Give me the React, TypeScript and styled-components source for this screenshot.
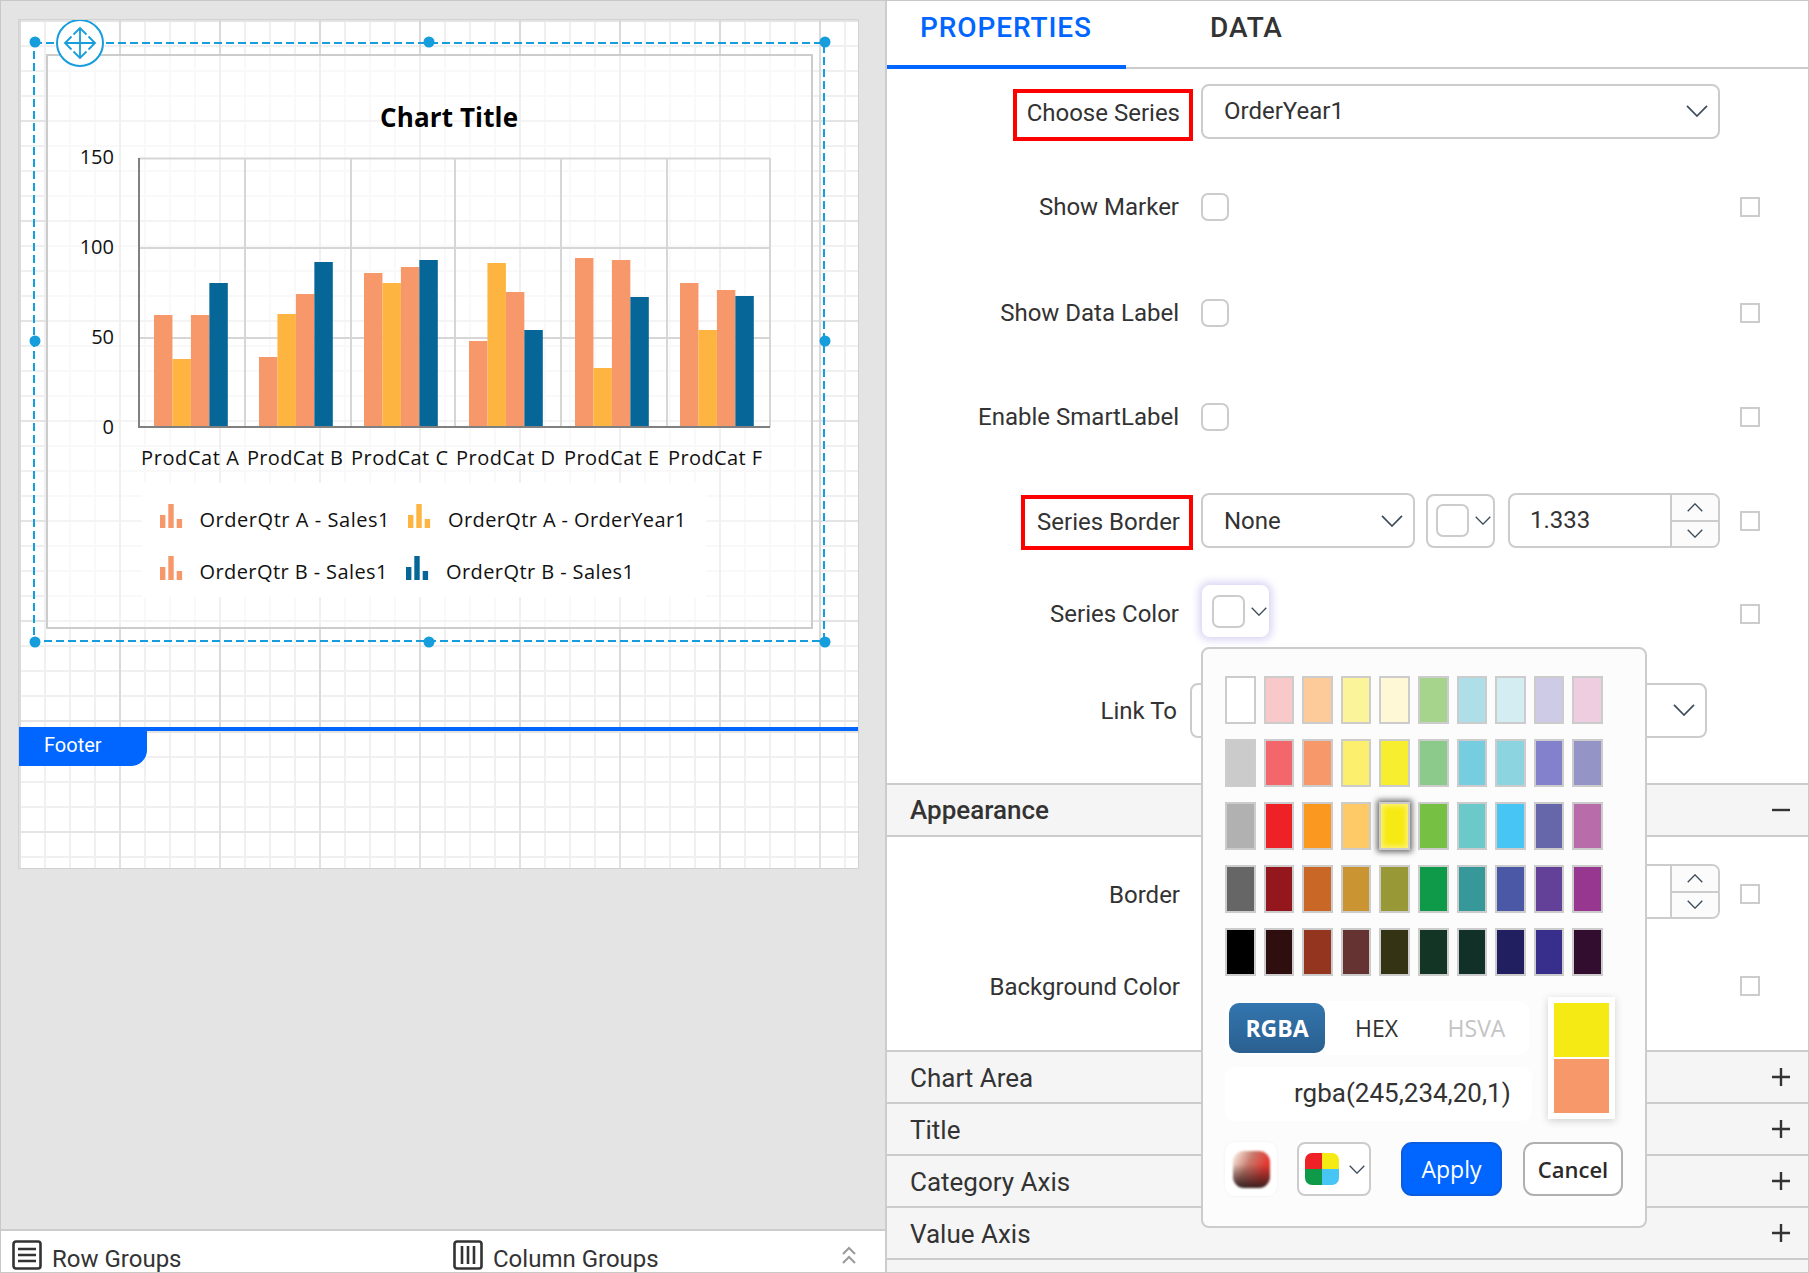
import React from "react";
import styled, { createGlobalStyle, css } from "styled-components";

const GlobalStyle = createGlobalStyle`
  html, body {
    margin: 0;
    padding: 0;
    background: #fff;
  }
  * {
    box-sizing: border-box;
  }
`;

const ORANGE = "#f7986a";
const AMBER = "#fdb441";
const NAVY = "#066698";
const HANDLE = "#159ddc";

const categories = [
  { name: "ProdCat A", x: 141, width: 98, start: 154, tops: [315, 359, 315, 283] },
  { name: "ProdCat B", x: 247, width: 96, start: 259, tops: [357, 314, 294, 262] },
  { name: "ProdCat C", x: 351, width: 97, start: 364, tops: [273, 283, 267, 260] },
  { name: "ProdCat D", x: 456, width: 99, start: 469, tops: [341, 263, 292, 330] },
  { name: "ProdCat E", x: 564, width: 95, start: 575, tops: [258, 368, 260, 297] },
  { name: "ProdCat F", x: 668, width: 94, start: 680, tops: [283, 330, 290, 296] },
];

const barColors = [ORANGE, AMBER, ORANGE, NAVY];

const legendItems = [
  { label: "OrderQtr A - Sales1", color: ORANGE, icon: 160, x: 199.5, width: 190, bottom: 528, y: 527 },
  { label: "OrderQtr A - OrderYear1", color: AMBER, icon: 408, x: 448, width: 238, bottom: 528, y: 527 },
  { label: "OrderQtr B - Sales1", color: ORANGE, icon: 160, x: 199.5, width: 188, bottom: 580, y: 579 },
  { label: "OrderQtr B - Sales1", color: NAVY, icon: 406, x: 446, width: 188, bottom: 580, y: 579 },
];

const axisTicks = [
  { label: "150", y: 164 },
  { label: "100", y: 254 },
  { label: "50", y: 344 },
  { label: "0", y: 434 },
];

const swatches = [
  ["#ffffff", "#f9c9ca", "#fdcb99", "#fcf49b", "#fff8d6", "#a7d48c", "#aedfe9", "#d3edf3", "#cdcbe5", "#eecde1"],
  ["#cbcbcb", "#f3666b", "#f7986a", "#fbef6d", "#f8ee30", "#8bca8a", "#76cddf", "#8dd4e1", "#8380cc", "#9594c7"],
  ["#b1b1b1", "#ee2127", "#fa9820", "#fec967", "#f6ea14", "#76c044", "#6bc9c9", "#47c6f6", "#6667ab", "#b86ca9"],
  ["#666666", "#93171c", "#c96726", "#ca9432", "#989836", "#0f9a49", "#369899", "#4b58a6", "#644198", "#97378f"],
  ["#000000", "#2f0e10", "#93351f", "#663333", "#343313", "#123525", "#113027", "#211f60", "#382f8c", "#320d30"],
];

const handles = [
  [35, 42],
  [429, 42],
  [825, 42],
  [35, 341],
  [825, 341],
  [35, 642],
  [429, 642],
  [825, 642],
];

const Chevron = ({ size = 22, up = false }: { size?: number; up?: boolean }) => (
  <svg width={size} height={size / 2 + 1} viewBox="0 0 22 12" fill="none">
    <path
      d={up ? "M1 11.2 L11 1 L21 11.2" : "M1 .8 L11 11 L21 .8"}
      stroke="#3d4d5c"
      strokeWidth={size < 18 ? 1.9 : 1.7}
    />
  </svg>
);

const SpinButtons = () => (
  <Spin>
    <SpinPart>
      <Chevron size={16} up />
    </SpinPart>
    <SpinPart>
      <Chevron size={16} />
    </SpinPart>
  </Spin>
);

const ChartDrawing = () => (
  <ChartSvg viewBox="48.5 56 762 571">
    <text x="380" y="127" fontSize="26" fontWeight="700" fill="#000" textLength="138">
      Chart Title
    </text>

    {[248, 338].map((y) => (
      <line key={y} x1="139" x2="770" y1={y} y2={y} stroke="#d6d6d6" strokeWidth="2" />
    ))}
    <line x1="139" x2="770" y1="158.5" y2="158.5" stroke="#d6d6d6" strokeWidth="2" />
    {[245, 351, 455, 561, 667, 770].map((x) => (
      <line key={x} x1={x} x2={x} y1="158" y2="427" stroke="#d6d6d6" strokeWidth="2" />
    ))}

    {categories.map((cat) =>
      cat.tops.map((top, i) => (
        <rect key={cat.name + i} x={cat.start + i * 18.45} y={top} width="18.45" height={427 - top} fill={barColors[i]} />
      )),
    )}

    <line x1="139" x2="139" y1="158" y2="428" stroke="#808080" strokeWidth="2" />
    <line x1="138" x2="770" y1="427" y2="427" stroke="#808080" strokeWidth="2" />

    {axisTicks.map((tick) => (
      <text key={tick.label} x="114" y={tick.y} fontSize="20" textAnchor="end" fill="#111">
        {tick.label}
      </text>
    ))}
    {categories.map((cat) => (
      <text key={cat.name} x={cat.x} y="465" fontSize="20" fill="#111" textLength={cat.width}>
        {cat.name}
      </text>
    ))}

    <rect x="142" y="483" width="564" height="114" fill="#fff" />
    {legendItems.map((item) => (
      <g key={item.label + item.x} fill={item.color}>
        <rect x={item.icon} y={item.bottom - 13} width="5.4" height="13" />
        <rect x={item.icon + 8.3} y={item.bottom - 24} width="5.4" height="24" />
        <rect x={item.icon + 16.7} y={item.bottom - 9} width="5.4" height="9" />
        <text x={item.x} y={item.y} fontSize="20" fill="#111" textLength={item.width}>
          {item.label}
        </text>
      </g>
    ))}
  </ChartSvg>
);

const SelectionOverlay = () => (
  <Overlay viewBox="19 20 839 848">
    <rect x="34" y="43" width="790" height="598" fill="none" stroke={HANDLE} strokeWidth="2" strokeDasharray="8 4" />
    {handles.map(([cx, cy]) => (
      <circle key={`${cx}-${cy}`} cx={cx} cy={cy} r="5.5" fill={HANDLE} />
    ))}
    <circle cx="80" cy="43" r="23" fill="#fff" stroke={HANDLE} strokeWidth="2" />
    <path
      d="M80 28v30M64.5 43h31M73.5 34.5l6.5-6.5 6.5 6.5M73.5 51.5l6.5 6.5 6.5-6.5M71.5 36.5l-6.5 6.5 6.5 6.5M88.5 36.5l6.5 6.5-6.5 6.5"
      fill="none"
      stroke={HANDLE}
      strokeWidth="1.8"
    />
  </Overlay>
);

const ColorPopup = () => (
  <Popup>
    <SwatchGrid>
      {swatches.flat().map((color, i) => (
        <Swatch key={i} $color={color} $selected={i === 24} />
      ))}
    </SwatchGrid>

    <ModeRow>
      <ModeColumn>
        <ModeTabs>
          <ModeActive>RGBA</ModeActive>
          <ModeTab>HEX</ModeTab>
          <ModeTab $muted>HSVA</ModeTab>
        </ModeTabs>
        <ValueBox>rgba(245,234,20,1)</ValueBox>
      </ModeColumn>
      <Preview>
        <PreviewPart $color="#f6ea14" />
        <PreviewPart $color={ORANGE} />
      </Preview>
    </ModeRow>

    <ActionRow>
      <GradientTile>
        <GradientChip />
      </GradientTile>
      <PaletteButton>
        <PaletteChip />
        <Chevron size={16} />
      </PaletteButton>
      <ApplyButton>Apply</ApplyButton>
      <CancelButton>Cancel</CancelButton>
    </ActionRow>
  </Popup>
);

const Section = ({ title, top }: { title: string; top?: boolean }) => (
  <SectionHeader>
    <SectionTitle $strong={top}>{title}</SectionTitle>
    <svg width="18" height="18" viewBox="0 0 18 18">
      <path d={top ? "M0 9h18" : "M0 9h18M9 0v18"} stroke="#333" strokeWidth="2.4" />
    </svg>
  </SectionHeader>
);

export default function App() {
  return (
    <Page>
      <GlobalStyle />
      <LeftPanel>
        <Workspace>
          <Canvas>
            <BodyBand>
              <ChartFrame>
                <ChartDrawing />
              </ChartFrame>
            </BodyBand>
            <FooterBand>
              <FooterTab>Footer</FooterTab>
            </FooterBand>
            <SelectionOverlay />
          </Canvas>
        </Workspace>
        <GroupBar>
          <GroupItem $width={441}>
            <svg width="30" height="30" viewBox="0 0 30 30" fill="none" stroke="#333" strokeWidth="2.6">
              <rect x="1.5" y="1.5" width="27" height="27" rx="2.5" />
              <path d="M6 9h18M6 15h18M6 21h18" />
            </svg>
            <GroupLabel>Row Groups</GroupLabel>
          </GroupItem>
          <GroupItem $width={388}>
            <svg width="30" height="30" viewBox="0 0 30 30" fill="none" stroke="#333" strokeWidth="2.6">
              <rect x="1.5" y="1.5" width="27" height="27" rx="2.5" />
              <path d="M9 6v18M15 6v18M21 6v18" />
            </svg>
            <GroupLabel>Column Groups</GroupLabel>
          </GroupItem>
          <CollapseIcon width="16" height="20" viewBox="0 0 16 20" fill="none" stroke="#9a9a9a" strokeWidth="2">
            <path d="M2 8l6-6 6 6M2 17l6-6 6 6" />
          </CollapseIcon>
        </GroupBar>
      </LeftPanel>

      <RightPanel>
        <Tabs>
          <Tab $active>PROPERTIES</Tab>
          <Tab>DATA</Tab>
        </Tabs>

        <FieldList>
          <FieldRow $height={84}>
            <MarkedLabel>Choose Series</MarkedLabel>
            <SelectBox>
              OrderYear1
              <Chevron />
            </SelectBox>
          </FieldRow>
          <FieldRow $height={108}>
            <FieldLabel>Show Marker</FieldLabel>
            <CheckBox />
            <RowCheck />
          </FieldRow>
          <FieldRow $height={104}>
            <FieldLabel>Show Data Label</FieldLabel>
            <CheckBox />
            <RowCheck />
          </FieldRow>
          <FieldRow $height={104}>
            <FieldLabel>Enable SmartLabel</FieldLabel>
            <CheckBox />
            <RowCheck />
          </FieldRow>
          <FieldRow $height={103}>
            <MarkedLabel $tall>Series Border</MarkedLabel>
            <ControlGroup>
              <SelectBox $width={214}>
                None
                <Chevron />
              </SelectBox>
              <ColorButton>
                <ColorChip />
                <Chevron size={16} />
              </ColorButton>
              <NumberBox>
                <NumberValue>1.333</NumberValue>
                <SpinButtons />
              </NumberBox>
            </ControlGroup>
            <RowCheck />
          </FieldRow>
          <FieldRow $height={84}>
            <FieldLabel>Series Color</FieldLabel>
            <ColorButton $focused>
              <ColorChip />
              <Chevron size={16} />
            </ColorButton>
            <RowCheck />
          </FieldRow>
          <FieldRow $height={108} $shifted>
            <FieldLabel $drop>Link To</FieldLabel>
            <SelectBox>
              <span />
              <Chevron />
            </SelectBox>
          </FieldRow>
        </FieldList>

        <Section title="Appearance" top />

        <SectionBody>
          <FieldRow $height={114}>
            <FieldLabel $drop>Border</FieldLabel>
            <ControlGroup>
              <NumberBox $push>
                <NumberValue />
                <SpinButtons />
              </NumberBox>
            </ControlGroup>
            <RowCheck />
          </FieldRow>
          <FieldRow $height={70}>
            <FieldLabel $drop>Background Color</FieldLabel>
            <span />
            <RowCheck />
          </FieldRow>
        </SectionBody>

        <Section title="Chart Area" />
        <Section title="Title" />
        <Section title="Category Axis" />
        <Section title="Value Axis" />
        <SectionHeader />

        <ColorPopup />
      </RightPanel>
    </Page>
  );
}

const gridLines = css`
  background-color: #fff;
  background-image:
    linear-gradient(to right, var(--major) 2px, transparent 2px),
    linear-gradient(to bottom, #e4e4e4 2px, transparent 2px),
    linear-gradient(to right, #f0f0f0 2px, transparent 2px),
    linear-gradient(to bottom, #f0f0f0 2px, transparent 2px);
  background-size:
    100px 100px,
    100px 100px,
    25px 25px,
    25px 25px;
`;

const Page = styled.div`
  display: flex;
  width: 1809px;
  height: 1273px;
  border: 1px solid #c8c8c8;
  overflow: hidden;
  font-family: Roboto, "Liberation Sans", sans-serif;
  font-size: 24px;
  color: #333;
`;

const LeftPanel = styled.div`
  display: flex;
  flex-direction: column;
  flex: 0 0 886px;
  border-right: 2px solid #cccccc;
`;

const Workspace = styled.div`
  flex: 1;
  padding: 19px 0 0 18px;
  background: #e4e4e4;
`;

const Canvas = styled.div`
  position: relative;
  display: flex;
  flex-direction: column;
  width: 839px;
  height: 848px;
  outline: 1px solid #d2d2d2;
`;

const BodyBand = styled.div`
  --major: #dadada;
  ${gridLines}
  height: 707px;
  padding: 34px 45px 0 27px;
`;

const FooterBand = styled.div`
  --major: #e2e2e2;
  ${gridLines}
  flex: 1;
  border-top: 4px solid #0066ff;
`;

const FooterTab = styled.div`
  display: flex;
  align-items: center;
  width: 128px;
  height: 35px;
  padding: 0 0 8px 25px;
  border-bottom-right-radius: 16px;
  background: #0066ff;
  color: #fff;
  font-size: 20px;
`;

const ChartFrame = styled.div`
  width: 767px;
  height: 575px;
  border: 2px solid #cccccc;
  background: rgba(255, 255, 255, 0.6);
`;

const ChartSvg = styled.svg`
  display: block;
  width: 100%;
  height: 100%;
  font-family: "Open Sans", "Noto Sans", sans-serif;
`;

const Overlay = styled.svg`
  position: absolute;
  inset: 0;
  width: 100%;
  height: 100%;
  pointer-events: none;
`;

const GroupBar = styled.div`
  display: flex;
  align-items: flex-start;
  flex: 0 0 43px;
  padding: 9px 0 0 11px;
  border-top: 2px solid #cccccc;
  background: #fff;
  overflow: hidden;
`;

const GroupItem = styled.div<{ $width: number }>`
  display: flex;
  align-items: flex-start;
  flex: 0 0 ${(p) => p.$width}px;
  gap: 10px;
  height: 30px;
  svg {
    flex: none;
  }
`;

const GroupLabel = styled.span`
  margin-top: 4px;
  line-height: 30px;
`;

const CollapseIcon = styled.svg`
  margin-top: 6px;
`;

const RightPanel = styled.div`
  position: relative;
  flex: 1;
  background: #fff;
`;

const Tabs = styled.div`
  display: flex;
  height: 68px;
  border-bottom: 2px solid #cccccc;
`;

const Tab = styled.div<{ $active?: boolean }>`
  height: 68px;
  width: ${(p) => (p.$active ? 239 : 300)}px;
  padding-left: ${(p) => (p.$active ? 33 : 84)}px;
  border-bottom: ${(p) => (p.$active ? "4px solid #0066ff" : "none")};
  color: ${(p) => (p.$active ? "#0066ff" : "#333")};
  font-size: 28px;
  font-weight: 500;
  line-height: 54px;
  letter-spacing: 0.9px;
`;

const FieldList = styled.div`
  padding-bottom: 19px;
`;

const FieldRow = styled.div<{ $height: number; $shifted?: boolean }>`
  display: grid;
  grid-template-columns: ${(p) => (p.$shifted ? "291px 517px" : "294px 519px 20px")};
  column-gap: ${(p) => (p.$shifted ? 12 : 20)}px;
  align-items: center;
  height: ${(p) => p.$height}px;
`;

const FieldLabel = styled.div<{ $drop?: boolean }>`
  padding: ${(p) => (p.$drop ? 2 : 0)}px ${(p) => (p.$drop ? 1 : 2)}px 0 0;
  text-align: right;
  white-space: nowrap;
`;

const MarkedLabel = styled.div<{ $tall?: boolean }>`
  justify-self: end;
  margin: ${(p) => (p.$tall ? "3px" : "8px")} -12px 0 0;
  padding: 0 9px ${(p) => (p.$tall ? 0 : 3)}px ${(p) => (p.$tall ? 12 : 10)}px;
  border: 4px solid #ff0000;
  line-height: ${(p) => (p.$tall ? 47 : 41)}px;
  white-space: nowrap;
`;

const SelectBox = styled.div<{ $width?: number }>`
  display: flex;
  align-items: center;
  justify-content: space-between;
  width: ${(p) => (p.$width ? `${p.$width}px` : "100%")};
  height: 55px;
  padding: 0 10px 0 21px;
  border: 2px solid #cccccc;
  border-radius: 8px;
  background: #fff;
`;

const ControlGroup = styled.div`
  display: flex;
  align-items: center;
  gap: 11px;
`;

const ColorButton = styled.div<{ $focused?: boolean }>`
  display: flex;
  align-items: center;
  gap: 6px;
  width: ${(p) => (p.$focused ? 67 : 69)}px;
  height: ${(p) => (p.$focused ? 52 : 54)}px;
  margin: ${(p) => (p.$focused ? "0 0 6px 1px" : "0")};
  padding-left: 8px;
  border: 2px solid ${(p) => (p.$focused ? "#fff" : "#cccccc")};
  border-radius: 8px;
  background: #fff;
  box-shadow: ${(p) => (p.$focused ? "0 0 8px 3px #d6d3f3" : "none")};
  svg {
    flex: none;
  }
`;

const ColorChip = styled.div`
  flex: none;
  width: 33px;
  height: 33px;
  border: 2px solid #cccccc;
  border-radius: 7px;
  background: #fff;
`;

const NumberBox = styled.div<{ $push?: boolean }>`
  display: flex;
  width: 212px;
  height: 55px;
  margin: ${(p) => (p.$push ? "0 0 5px auto" : "0 0 0 2px")};
  border: 2px solid #cccccc;
  border-radius: 8px;
  overflow: hidden;
`;

const NumberValue = styled.div`
  flex: 1;
  padding-left: 20px;
  line-height: 51px;
`;

const Spin = styled.div`
  display: flex;
  flex-direction: column;
  flex: 0 0 48px;
  border-left: 2px solid #cccccc;
  background: #fbfbfb;
`;

const SpinPart = styled.div`
  display: flex;
  align-items: center;
  justify-content: center;
  flex: 1;
  &:first-child {
    border-bottom: 2px solid #cccccc;
  }
`;

const CheckBox = styled.div`
  width: 28px;
  height: 28px;
  border: 2px solid #cccccc;
  border-radius: 7px;
  background: #fff;
`;

const RowCheck = styled.div`
  width: 20px;
  height: 20px;
  border: 2px solid #cccccc;
  background: #fff;
`;

const SectionHeader = styled.div`
  display: flex;
  align-items: center;
  justify-content: space-between;
  height: 52px;
  padding: 0 18px 0 23px;
  border-top: 2px solid #cccccc;
  background: #f5f5f5;
`;

const SectionTitle = styled.div<{ $strong?: boolean }>`
  padding-top: ${(p) => (p.$strong ? 0 : 2)}px;
  font-size: 26px;
  font-weight: ${(p) => (p.$strong ? 500 : 400)};
`;

const SectionBody = styled.div`
  padding-bottom: 29px;
  border-top: 2px solid #cccccc;
`;

const Popup = styled.div`
  position: absolute;
  top: 646px;
  left: 314px;
  width: 446px;
  height: 581px;
  padding: 27px 0 0 22px;
  border: 2px solid #cccccc;
  border-radius: 8px;
  background: #fcfcfc;
`;

const SwatchGrid = styled.div`
  display: grid;
  grid-template-columns: repeat(10, 1fr);
  grid-auto-rows: 48px;
  gap: 15px 8px;
  width: 378px;
`;

const Swatch = styled.div<{ $color: string; $selected?: boolean }>`
  border: 2px solid #cccccc;
  background: ${(p) => p.$color};
  ${(p) =>
    p.$selected &&
    css`
      box-shadow:
        0 0 6px 2px rgba(0, 0, 0, 0.6),
        inset 0 0 5px 2px #fff176;
    `}
`;

const ModeRow = styled.div`
  display: flex;
  margin-top: 21px;
`;

const ModeColumn = styled.div`
  display: flex;
  flex-direction: column;
  gap: 12px;
  width: 307px;
  padding-top: 4px;
`;

const ModeTabs = styled.div`
  display: flex;
  align-items: center;
  width: 304px;
  height: 54px;
  padding-left: 4px;
  border-radius: 10px;
  background: #fff;
  font-family: "Open Sans", "Noto Sans", sans-serif;
`;

const ModeActive = styled.div`
  display: flex;
  align-items: center;
  justify-content: center;
  width: 96px;
  height: 50px;
  border-radius: 10px;
  background: linear-gradient(#3375ae, #2a6090);
  color: #fff;
  font-size: 23px;
  font-weight: 700;
`;

const ModeTab = styled.div<{ $muted?: boolean }>`
  width: 100px;
  padding-left: 3px;
  color: ${(p) => (p.$muted ? "#c4c4c4" : "#333")};
  font-size: 23px;
  text-align: center;
`;

const ValueBox = styled.div`
  height: 54px;
  padding-left: 69px;
  border-radius: 10px;
  background: #fff;
  font-size: 26px;
  line-height: 52px;
  white-space: nowrap;
`;

const Preview = styled.div`
  display: flex;
  flex-direction: column;
  gap: 2px;
  width: 67px;
  height: 122px;
  margin-left: 16px;
  padding: 6px;
  background: #fff;
  box-shadow: 0 2px 8px rgba(0, 0, 0, 0.18);
`;

const PreviewPart = styled.div<{ $color: string }>`
  flex: 1;
  background: ${(p) => p.$color};
`;

const ActionRow = styled.div`
  display: flex;
  margin-top: 21px;
  height: 54px;
`;

const GradientTile = styled.div`
  display: flex;
  align-items: center;
  justify-content: center;
  width: 52px;
  border-radius: 10px;
  background: #fff;
  box-shadow: 0 0 3px rgba(0, 0, 0, 0.06);
`;

const GradientChip = styled.div`
  width: 37px;
  height: 37px;
  border-radius: 11px;
  background:
    linear-gradient(rgba(40, 30, 30, 0) 35%, rgba(40, 30, 30, 0.92)),
    linear-gradient(115deg, #f0d8cc 10%, #c8776a 40%, #e8362f 75%);
  filter: blur(1px);
`;

const PaletteButton = styled.div`
  display: flex;
  align-items: center;
  gap: 10px;
  width: 74px;
  margin-left: 20px;
  padding-left: 6px;
  border: 2px solid #cccccc;
  border-radius: 8px;
  background: #fff;
`;

const PaletteChip = styled.div`
  flex: none;
  width: 34px;
  height: 32px;
  border-radius: 7px;
  background: conic-gradient(#f6ea14 0 25%, #47c6f6 0 50%, #0f9a49 0 75%, #ee2127 0);
`;

const actionButton = css`
  display: flex;
  align-items: center;
  justify-content: center;
  border-radius: 11px;
  font-family: "Open Sans", "Noto Sans", sans-serif;
`;

const ApplyButton = styled.div`
  ${actionButton}
  width: 101px;
  margin-left: 30px;
  border: 2px solid #0a5de0;
  background: #0066ff;
  color: #fff;
  font-size: 23px;
`;

const CancelButton = styled.div`
  ${actionButton}
  width: 100px;
  margin-left: 21px;
  border: 2px solid #b0b0b0;
  background: #fff;
  color: #2a2a2a;
  font-size: 22px;
  font-weight: 600;
`;
